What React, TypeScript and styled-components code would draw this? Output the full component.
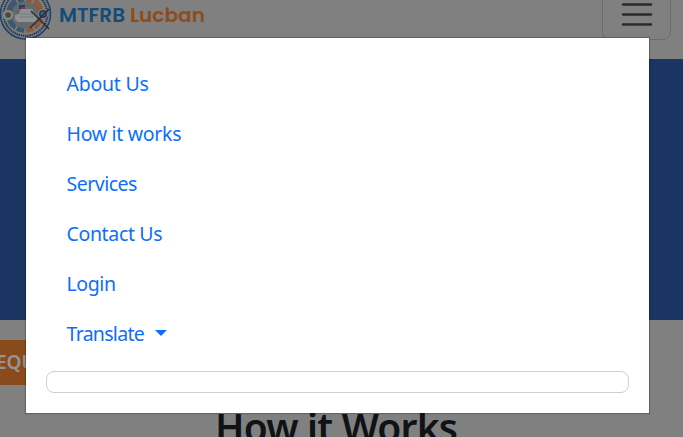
import React from 'react';
import styled, { createGlobalStyle } from 'styled-components';

const GlobalStyle = createGlobalStyle`
  * { box-sizing: border-box; }
  body { margin: 0; background: #808080; overflow: hidden; font-family: "Noto Sans", sans-serif; }
`;

const Page = styled.div`
  position: relative;
  height: 437px;
  overflow: hidden;
  background: #808080;
`;

const Header = styled.header`
  display: flex;
  justify-content: space-between;
  height: 59px;
  padding-right: 12px;
`;

const Brand = styled.div`
  display: flex;
  align-items: flex-start;
`;

const Logo = styled.svg`
  display: block;
  width: 52px;
  height: 52px;
  margin-top: -12px;
`;

const BrandName = styled.div`
  margin-left: 7px;
  font: 600 20px/30px Poppins, Lato, sans-serif;
  letter-spacing: 0.05px;
  color: #144c79;
  white-space: nowrap;
  span { color: #8d4c1a; }
`;

const Toggler = styled.div`
  width: 69px;
  height: 54px;
  margin-top: -14px;
  display: flex;
  justify-content: center;
  padding-top: 8px;
  border: 1px solid #6c6c6c;
  border-radius: 8px;
`;

const Hero = styled.section`
  height: 261px;
  background: #1a3561;
`;

const Content = styled.main`
  padding-top: 20px;
`;

const Request = styled.div`
  width: 120px;
  height: 45px;
  background: #8a4b1c;
  color: #959595;
  font: 600 19px/44px "Noto Sans", sans-serif;
  text-indent: -4px;
`;

const Heading = styled.h2`
  margin: 18px 0 0 215px;
  font: 600 39px/48px "Noto Sans", sans-serif;
  letter-spacing: -0.8px;
  color: #101315;
  white-space: nowrap;
`;

const Menu = styled.nav`
  position: absolute;
  left: 26px;
  top: 38px;
  width: 623px;
  height: 375px;
  padding: 20px 20px 20px;
  background: #fff;
  box-shadow: 0 0 1px 1px rgba(0, 0, 0, 0.22);
`;

const MenuLink = styled.a<{ $spacing: number }>`
  display: flex;
  align-items: center;
  height: 50px;
  padding-left: 20.5px;
  color: #0d6efd;
  font-size: 19.5px;
  letter-spacing: ${(p) => p.$spacing}px;
  white-space: nowrap;
`;

const Caret = styled.span`
  margin: 0 0 0 11px;
  border-top: 6px solid #0d6efd;
  border-left: 6px solid transparent;
  border-right: 6px solid transparent;
`;

const TranslateBox = styled.div`
  height: 22px;
  margin-top: 13px;
  border: 1px solid #cfcfcf;
  border-radius: 8px;
`;

const links = [
  { label: 'About Us', spacing: -0.25 },
  { label: 'How it works', spacing: -0.3 },
  { label: 'Services', spacing: -0.5 },
  { label: 'Contact Us', spacing: -0.35 },
  { label: 'Login', spacing: -0.4 },
  { label: 'Translate', spacing: -0.7, caret: true },
];

function Seal() {
  return (
    <Logo viewBox="0 0 52 52">
      <circle cx="25.5" cy="26" r="25" fill="#7b8187" stroke="#1c4271" strokeWidth="1.6" />
      <circle cx="25.5" cy="26" r="21.8" fill="none" stroke="#34383c" strokeWidth="2.2" strokeDasharray="1.5 .7" />
      <path d="M25 7a19 19 0 0 0 0 38z" fill="#3c5870" />
      <path d="M25 7a19 19 0 0 1 0 38z" fill="#8a5b3d" />
      <path d="M25 7v38M15 10l20 32M35 10 15 42" stroke="#7d7f80" strokeWidth="1.5" />
      <circle cx="25" cy="27" r="13.5" fill="#65696d" />
      <path d="M15 32v-5l4-1 2-5h11l3 5 2 2v6H18z" fill="#8f9294" />
      <path d="M21 26h12M19 29h15" stroke="#777b7e" />
      <circle cx="8" cy="27" r="5.3" fill="#858585" />
      <circle cx="8" cy="27" r="2.8" fill="#31553e" />
      <path d="M7 26h3v2H7z" fill="#7c3036" />
      <circle cx="43" cy="26" r="5" fill="#858585" />
      <circle cx="43" cy="26" r="4" fill="#292e83" />
      <circle cx="43" cy="26" r="2.4" fill="#3c7460" />
      <path d="M19 17h6v4h-6z" fill="#283b80" />
      <path d="M21 19h4v2h-4z" fill="#91343a" />
      <path d="m31 23 18 18M49 21 30 40" stroke="#332f30" strokeWidth="1.7" />
    </Logo>
  );
}

export default function App() {
  return (
    <>
      <GlobalStyle />
      <Page>
        <Header>
          <Brand>
            <Seal />
            <BrandName>MTFRB <span>Lucban</span></BrandName>
          </Brand>
          <Toggler>
            <svg width="38" height="38" viewBox="0 0 38 38">
              <path d="M5 9.5h28M5 19.5h28M5 29.5h28" stroke="#2b2b2b" strokeWidth="2.5" strokeLinecap="round" />
            </svg>
          </Toggler>
        </Header>
        <Hero />
        <Content>
          <Request>EQUEST</Request>
          <Heading>How it Works</Heading>
        </Content>
        <Menu>
          {links.map((l) => (
            <MenuLink key={l.label} $spacing={l.spacing}>
              {l.label}
              {l.caret && <Caret />}
            </MenuLink>
          ))}
          <TranslateBox />
        </Menu>
      </Page>
    </>
  );
}
